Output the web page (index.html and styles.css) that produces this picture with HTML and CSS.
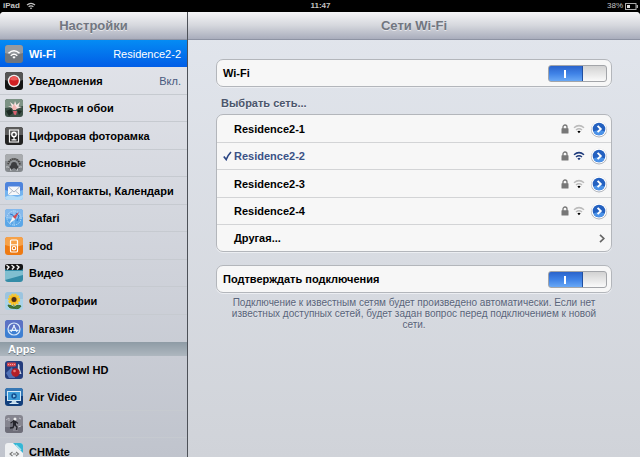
FILE: index.html
```html
<!DOCTYPE html>
<html lang="ru">
<head>
    <meta charset="UTF-8">
    <meta name="viewport" content="width=device-width, initial-scale=1.0">
    <title>Настройки</title>
    <link rel="stylesheet" href="styles.css">
</head>
<body>
    <!-- shared glyphs -->
    <svg class="defs" aria-hidden="true">
        <symbol id="wifi" viewBox="0 0 12 10">
            <path d="M1 3.7Q6-.5 11 3.7M3 6Q6 3.5 9 6" fill="none" stroke="currentColor" stroke-width="1.5"/>
            <path class="dot" d="M6 9.2L4.4 7.5Q6 6.2 7.6 7.5z"/>
        </symbol>
        <symbol id="lock" viewBox="0 0 8 10">
            <path d="M2 5V3a2 2 0 0 1 4 0v2" fill="none" stroke="#777" stroke-width="1.3"/>
            <rect x=".5" y="4.2" width="7" height="5.3" rx=".5" fill="#777"/>
        </symbol>
        <symbol id="arrow" viewBox="0 0 18 18">
            <circle cx="9" cy="9.4" r="8" fill="#a9adb5"/>
            <circle cx="9" cy="8.8" r="7.6" fill="#fff"/>
            <circle cx="9" cy="9" r="6.3" fill="#2461c0"/>
            <path d="M3.4 11.5a6 6 0 0 0 11.2 0Q9 8.5 3.4 11.5z" fill="#4b92e8"/>
            <path d="M7.6 5.8L10.800 9L7.600 12.200" fill="none" stroke="#fff" stroke-width="1.900"/>
        </symbol>
    </svg>

    <div class="status-bar">
        <span class="carrier">iPad <svg class="signal" width="10" height="8"><use href="#wifi"/></svg></span>
        <time>11:47</time>
        <span class="battery">38%
            <svg width="13" height="7" viewBox="0 0 13 7"><rect x=".5" y=".5" width="10.500" height="6" fill="none" stroke="#aaa"/><rect x="2" y="2" width="3" height="3" fill="#ddd"/><rect x="11.500" y="2" width="1.500" height="3" fill="#aaa"/></svg>
        </span>
    </div>

    <div class="settings">
        <nav class="sidebar">
            <h1 class="title-bar">Настройки</h1>
            <ul class="menu">
                <li><a href="#" class="active">
                    <svg class="icon" viewBox="0 0 18 18"><rect width="18" height="18" rx="3" fill="#71767c"/><path d="M0 3a3 3 0 0 1 3-3h12a3 3 0 0 1 3 3v5Q9 11 0 8z" fill="#969a9f"/><path d="M3.500 8.200Q9 3.200 14.500 8.200M5.700 10.800Q9 7.800 12.300 10.800" fill="none" stroke="#fff" stroke-width="1.500"/><path d="M9 13.800L7.300 12Q9 10.700 10.700 12z" fill="#fff"/></svg>
                    Wi-Fi <span class="value">Residence2-2</span></a></li>
                <li><a href="#">
                    <svg class="icon" viewBox="0 0 18 18"><rect width="18" height="18" rx="3" fill="#151515"/><path d="M0 3a3 3 0 0 1 3-3h12a3 3 0 0 1 3 3v5Q9 11 0 8z" fill="#555"/><circle cx="9" cy="9" r="6.200" fill="#eee"/><circle cx="9" cy="9" r="4.800" fill="#d01f22"/><path d="M5 7.500a4.200 4.200 0 0 1 8 0Q9 9.500 5 7.500z" fill="#ea5a58"/></svg>
                    Уведомления <span class="value">Вкл.</span></a></li>
                <li><a href="#">
                    <svg class="icon" viewBox="0 0 18 18"><rect width="18" height="18" rx="3" fill="#3d5147"/><path d="M0 3a3 3 0 0 1 3-3h12a3 3 0 0 1 3 3v4L0 9z" fill="#7d9385"/><path d="M1 12l5-2 2 4-4 3zM12 11l5 1-3 4z" fill="#1d2b24"/><path d="M9 10L3 7l4 .5L5 3l4 3 1-4 1.500 4L15 3l-1.500 4.500L17 8l-7 2.500z" fill="#f8e5e3"/><path d="M7 9l2-4 3 4-1 2H8z" fill="#f4b7b5"/><path d="M8 12h4l-1 4-2-.5z" fill="#d65f6e"/></svg>
                    Яркость и обои</a></li>
                <li><a href="#">
                    <svg class="icon" viewBox="0 0 18 18"><rect width="18" height="18" rx="3" fill="#222"/><path d="M0 3a3 3 0 0 1 3-3h12a3 3 0 0 1 3 3v5H0z" fill="#5b5b5b"/><rect x="4.500" y="3" width="9" height="12" fill="none" stroke="#eee" stroke-width="1.200"/><circle cx="9" cy="7.500" r="2.200" fill="#444" stroke="#fff" stroke-width="1.400"/><path d="M9 10v3M6.500 12.800h5" stroke="#fff" stroke-width="1.200"/></svg>
                    Цифровая фоторамка</a></li>
                <li><a href="#">
                    <svg class="icon" viewBox="0 0 18 18"><rect width="18" height="18" rx="3" fill="#85898d"/><path d="M0 3a3 3 0 0 1 3-3h12a3 3 0 0 1 3 3v4H0z" fill="#a8abae"/><path d="M3 11a6 6 0 0 1 12 0" fill="#8f9295" stroke="#444" stroke-width="1.800"/><path d="M3 11a6 6 0 0 1 12 0" fill="none" stroke="#999" stroke-width="2.400" stroke-dasharray=".6 1.600"/><path d="M9 8a3 3 0 0 1 3 3l2.500 3-2 2L9 14l-3.500 2-2-2L6 11a3 3 0 0 1 3-3z" fill="#3c3d3f"/><path d="M1 13q4-1 5 4M17 13q-4-1-5 4" fill="none" stroke="#c8cacc"/></svg>
                    Основные</a></li>
                <li><a href="#">
                    <svg class="icon" viewBox="0 0 18 18"><rect width="18" height="18" rx="3" fill="#73b4f0"/><path d="M0 3a3 3 0 0 1 3-3h12a3 3 0 0 1 3 3v5Q9 11 0 8z" fill="#4e83dc"/><path d="M0 15q5-3 9-1t9-1v2a3 3 0 0 1-3 3H3a3 3 0 0 1-3-3z" fill="#b4dcf8"/><rect x="3" y="4.500" width="12" height="8.500" rx="1" fill="#f7f8fa"/><path d="M3.500 5L9 10l5.500-5M3.500 12.500l4-3.500M14.500 12.500l-4-3.500" fill="none" stroke="#9ba6b6" stroke-width=".8"/></svg>
                    Mail, Контакты, Календари</a></li>
                <li><a href="#">
                    <svg class="icon" viewBox="0 0 18 18"><rect width="18" height="18" rx="3" fill="#5ba7e8"/><path d="M0 3a3 3 0 0 1 3-3h12a3 3 0 0 1 3 3v5Q9 11 0 8z" fill="#85b9ec"/><circle cx="9" cy="9" r="7" fill="none" stroke="#c8e6fa" stroke-dasharray="1 1"/><path d="M9 1v16M1 9h16" stroke="#a7d4f5" stroke-width=".8"/><path d="M5 5l3 1 1 3-3 2M11 4l3 3-2 5" fill="none" stroke="#3279c9"/><path d="M14 3L10.200 10.200 7.800 7.800z" fill="#d64b50"/><path d="M4 15l3.800-7.200 2.400 2.400z" fill="#f1f4f8"/></svg>
                    Safari</a></li>
                <li><a href="#">
                    <svg class="icon" viewBox="0 0 18 18"><rect width="18" height="18" rx="3" fill="#ee7a12"/><path d="M0 3a3 3 0 0 1 3-3h12a3 3 0 0 1 3 3v5Q9 11 0 8z" fill="#f6a24a"/><rect x="5.500" y="3" width="7" height="12" rx="1" fill="none" stroke="#fff" stroke-width="1.200"/><path d="M6 7.800h6" stroke="#fff"/><circle cx="9" cy="11.200" r="1.700" fill="none" stroke="#fff" stroke-width="1.100"/></svg>
                    iPod</a></li>
                <li><a href="#">
                    <svg class="icon" viewBox="0 0 18 18"><rect y="3" width="18" height="15" rx="3" fill="#348ca7"/><path d="M0 7h18v4L0 16z" fill="#80bfd0"/><rect y="0" width="18" height="6" rx="2" fill="#151515"/><path d="M1.500 1l2.500 2-2 2.500M6.500 1l2.500 2-2 2.500M11.500 1L14 3l-2 2.500" fill="none" stroke="#f4f4f4" stroke-width="1.400"/></svg>
                    Видео</a></li>
                <li><a href="#">
                    <svg class="icon" viewBox="0 0 18 18"><rect width="18" height="18" rx="3" fill="#a9d3e9"/><path d="M0 3a3 3 0 0 1 3-3h12a3 3 0 0 1 3 3v4H0z" fill="#9cc4df"/><path d="M9 11v6M9 16Q4 17 3 13q4 0 6 3 2-4 7-2-2 4-7 2" fill="#447c36" stroke="#37672b"/><circle cx="9" cy="7.500" r="4.800" fill="#f4b51c" stroke="#f7c934" stroke-width="2.600" stroke-dasharray="2 .8"/><circle cx="9" cy="7.500" r="2.500" fill="#503016"/></svg>
                    Фотографии</a></li>
                <li><a href="#">
                    <svg class="icon" viewBox="0 0 18 18"><rect width="18" height="18" rx="3" fill="#3e7fd2"/><path d="M0 3a3 3 0 0 1 3-3h12a3 3 0 0 1 3 3v5Q9 11 0 8z" fill="#5c72c4"/><circle cx="9" cy="9" r="6" fill="none" stroke="#d8e8fa" stroke-width="1.200"/><path d="M9.500 5L6 12M8.500 5l3.500 7M4.500 10.300h9" stroke="#e8f2fd" stroke-width="1.200"/></svg>
                    Магазин</a></li>
            </ul>
            <h2 class="section">Apps</h2>
            <ul class="menu">
                <li><a href="#">
                    <svg class="icon" viewBox="0 0 18 18"><rect width="18" height="18" rx="3" fill="#253d7d"/><path d="M1 12l6-6 3 11H4z" fill="#5272b6"/><rect x="2" y="1.500" width="9" height="4" rx="1" fill="#d6464d"/><path d="M3 3.500h7" stroke="#f4aaa9" stroke-dasharray="1 1"/><path d="M13 3q2 0 1.500 4l2 6h-4z" fill="#cbd2e2"/><circle cx="10.500" cy="11.500" r="4.200" fill="#b31f28"/><circle cx="9.500" cy="10" r="1.300" fill="#ed7772"/></svg>
                    ActionBowl HD</a></li>
                <li><a href="#">
                    <svg class="icon" viewBox="0 0 18 18"><rect width="18" height="18" rx="3" fill="#123f7d"/><path d="M0 3a3 3 0 0 1 3-3h12a3 3 0 0 1 3 3v5H0z" fill="#3677b4"/><rect x="2.500" y="3.500" width="13" height="9" fill="#3b9cd9" stroke="#d4e8f5"/><circle cx="9" cy="8" r="2.700" fill="#124c8f"/><path d="M8.200 6.500L10.800 8 8.200 9.500z" fill="#8de0ff"/><path d="M7 13h4l1 2.500H6z" fill="#c1d9ea"/><path d="M4.500 15.500h9" stroke="#d4e8f5"/></svg>
                    Air Video</a></li>
                <li><a href="#">
                    <svg class="icon" viewBox="0 0 18 18"><rect width="18" height="18" rx="3" fill="#85858f"/><path d="M0 12h5V8h3v8h5v-5h5v4a3 3 0 0 1-3 3H3a3 3 0 0 1-3-3z" fill="#6e6e79"/><path d="M1 5l3-2v3M14 3l2 1M13 12l3-1" stroke="#bdbdc5" fill="none"/><circle cx="10" cy="4" r="1.500" fill="#eee"/><path d="M8 5l3 1 0 4-3 .5z" fill="#24242b"/><path d="M9 6L5.500 8M10.500 6.500L13 8.500M9 10l-1 2.500-3 .5M10 10l2 2-.5 3" fill="none" stroke="#24242b" stroke-width="1.400"/></svg>
                    Canabalt</a></li>
                <li><a href="#">
                    <svg class="icon" viewBox="0 0 18 18"><rect width="18" height="18" rx="3" fill="#eef0f2"/><path d="M8 0h7a3 3 0 0 1 3 3v7z" fill="#35b6d5"/><path d="M11 2l5 5" stroke="#a5e2ef" stroke-width="1.500"/><path d="M7.500 9l-2.500 2 2.500 2M11 9l2.500 2-2.500 2M8 11h3" fill="none" stroke="#777" stroke-width="1.100"/></svg>
                    CHMate</a></li>
            </ul>
        </nav>

        <main class="detail">
            <h1 class="title-bar">Сети Wi-Fi</h1>
            <div class="content">
                <div class="group">
                    <div class="row switch-row">
                        <label for="wifiSwitch">Wi-Fi</label>
                        <input type="checkbox" class="switch" id="wifiSwitch" checked>
                    </div>
                </div>

                <h2 class="group-title">Выбрать сеть...</h2>
                <ul class="group networks">
                    <li class="row">
                        <span class="check"></span><span class="name">Residence2-1</span>
                        <svg class="lock"><use href="#lock"/></svg><svg class="strength"><use href="#wifi"/></svg>
                        <button class="more" aria-label="Residence2-1"><svg width="18" height="18"><use href="#arrow"/></svg></button>
                    </li>
                    <li class="row selected">
                        <span class="check"><svg width="9" height="10" viewBox="0 0 9 10"><path d="M.8 5.500L3.200 8.500Q5 4 8 1" fill="none" stroke="#2c4684" stroke-width="1.700"/></svg></span><span class="name">Residence2-2</span>
                        <svg class="lock"><use href="#lock"/></svg><svg class="strength"><use href="#wifi"/></svg>
                        <button class="more" aria-label="Residence2-2"><svg width="18" height="18"><use href="#arrow"/></svg></button>
                    </li>
                    <li class="row">
                        <span class="check"></span><span class="name">Residence2-3</span>
                        <svg class="lock"><use href="#lock"/></svg><svg class="strength"><use href="#wifi"/></svg>
                        <button class="more" aria-label="Residence2-3"><svg width="18" height="18"><use href="#arrow"/></svg></button>
                    </li>
                    <li class="row">
                        <span class="check"></span><span class="name">Residence2-4</span>
                        <svg class="lock"><use href="#lock"/></svg><svg class="strength"><use href="#wifi"/></svg>
                        <button class="more" aria-label="Residence2-4"><svg width="18" height="18"><use href="#arrow"/></svg></button>
                    </li>
                    <li class="row">
                        <span class="check"></span><a href="#" class="name">Другая...</a>
                        <svg class="chevron" width="6" height="9" viewBox="0 0 6 9"><path d="M1 .8L4.800 4.500 1 8.200" fill="none" stroke="#666" stroke-width="1.700"/></svg>
                    </li>
                </ul>

                <div class="group">
                    <div class="row switch-row">
                        <label for="askSwitch">Подтверждать подключения</label>
                        <input type="checkbox" class="switch" id="askSwitch" checked>
                    </div>
                </div>
                <p class="hint">Подключение к известным сетям будет произведено автоматически. Если нет известных доступных сетей, будет задан вопрос перед подключением к новой сети.</p>
            </div>
        </main>
    </div>
</body>
</html>
```
FILE: styles.css
```css
* {
    box-sizing: border-box;
}
body {
    margin: 0;
    height: 100vh;
    overflow: hidden;
    display: flex;
    flex-direction: column;
    background: #000;
    color: #000;
    font-family: "Liberation Sans", Arial, sans-serif;
    font-size: 11px;
}
h1, h2, p, ul {
    margin: 0;
    padding: 0;
}
ul {
    list-style: none;
}
a {
    color: inherit;
    text-decoration: none;
}
svg {
    flex: none;
}
.defs {
    position: absolute;
    width: 0;
    height: 0;
}

/* Status bar */
.status-bar {
    display: grid;
    grid-template-columns: 1fr auto 1fr;
    align-items: center;
    flex: none;
    height: 12px;
    padding: 0 2px 0 3px;
    color: #c4c4c4;
    font-size: 8px;
    font-weight: bold;
    line-height: 12px;
}
.carrier, .battery {
    display: flex;
    align-items: center;
    gap: 6px;
}
.battery {
    justify-content: flex-end;
    gap: 2px;
    font-weight: normal;
}
.signal {
    fill: #c4c4c4;
}

/* Two panes */
.settings {
    display: flex;
    flex: 1;
    min-height: 0;
}
.sidebar {
    width: 188px;
    flex: none;
    overflow: hidden;
    border-right: 1px solid #4d5158;
    border-top-left-radius: 4px;
    background: linear-gradient(#e4e6ec, #c0c4cd);
}
.detail {
    flex: 1;
    min-width: 0;
    overflow: hidden;
    border-top-right-radius: 4px;
    background: linear-gradient(#e2e6ed, #d0d3d9);
}
.title-bar {
    height: 28px;
    border-bottom: 1px solid #8e93a3;
    background: linear-gradient(#f5f5f7, #d5d7dd 50%, #a9adbc);
    color: #717680;
    font-size: 13px;
    line-height: 28px;
    text-align: center;
    text-shadow: 0 1px 0 #e4e5ea;
}

/* Left menu */
.menu li {
    height: 27px;
    border-bottom: 1px solid #c6cad0;
}
.menu li:nth-child(even) {
    height: 28px;
}
.menu li:first-child, .menu li:last-child {
    border-bottom: 0;
}
.menu a {
    display: flex;
    align-items: center;
    gap: 6px;
    height: 100%;
    padding: 0 6px 0 5px;
    font-weight: bold;
    white-space: nowrap;
}
.menu .active {
    background: linear-gradient(#058cf4, #015de6);
    color: #fff;
}
.icon {
    width: 18px;
    height: 18px;
}
.value {
    margin-left: auto;
    color: #48587e;
    font-weight: normal;
}
.active .value {
    color: #fff;
}
.section {
    height: 14px;
    padding-left: 8px;
    background: linear-gradient(#8e9ba5, #aeb7bf);
    color: #fff;
    font-size: 11px;
    line-height: 14px;
    text-shadow: 0 1px 0 #6f7c86;
}

/* Right pane */
.content {
    padding: 19px 28px;
}
.group {
    border: 1px solid #b3b6bb;
    border-radius: 7px;
    background: #f7f7f7;
    box-shadow: 0 1px 0 #eceef2;
}
.row {
    display: flex;
    align-items: center;
    height: 27px;
    padding: 0 3px 0 6px;
    font-weight: bold;
}
.switch-row {
    justify-content: space-between;
    height: 26px;
    padding-right: 4px;
}
.group-title {
    padding: 10px 5px 4px;
    color: #4b566c;
    font-size: 11px;
    line-height: 13px;
    text-shadow: 0 1px 0 #f0f2f5;
}
.networks {
    margin-bottom: 13px;
}
.networks .row + .row {
    border-top: 1px solid #d3d4d6;
}
.networks .row:nth-child(3) {
    height: 28px;
}
.check {
    width: 11px;
    line-height: 0;
}
.name {
    flex: 1;
}
.selected .name {
    color: #3b5286;
}
.lock {
    width: 8px;
    height: 10px;
    margin-right: 4px;
}
.strength {
    width: 12px;
    height: 10px;
    margin-right: 5px;
    color: #bcbcbc;
    fill: #000;
}
.selected .strength {
    color: #213d7d;
    fill: #213d7d;
}
.more {
    width: 18px;
    height: 18px;
    padding: 0;
    border: 0;
    background: none;
    line-height: 0;
    cursor: pointer;
}
.chevron {
    margin-right: 3px;
}
.switch {
    appearance: none;
    width: 59px;
    height: 17px;
    margin: 0;
    border: 1px solid #a3a5a9;
    border-radius: 3px;
    background:
        linear-gradient(#fff, #fff) 15px 4px / 2px 8px no-repeat,
        linear-gradient(#2150a0, #2150a0) 33px 0 / 1px 100% no-repeat,
        linear-gradient(#2a63cb, #3f82e6 50%, #69a8f5) 0 0 / 33px 100% no-repeat,
        linear-gradient(#d2d2d2, #fafafa);
    cursor: pointer;
}
.hint {
    padding: 4px 12px;
    color: #59647a;
    font-size: 10px;
    line-height: 11px;
    text-align: center;
    text-shadow: 0 1px 0 #e1e4e8;
}
```
